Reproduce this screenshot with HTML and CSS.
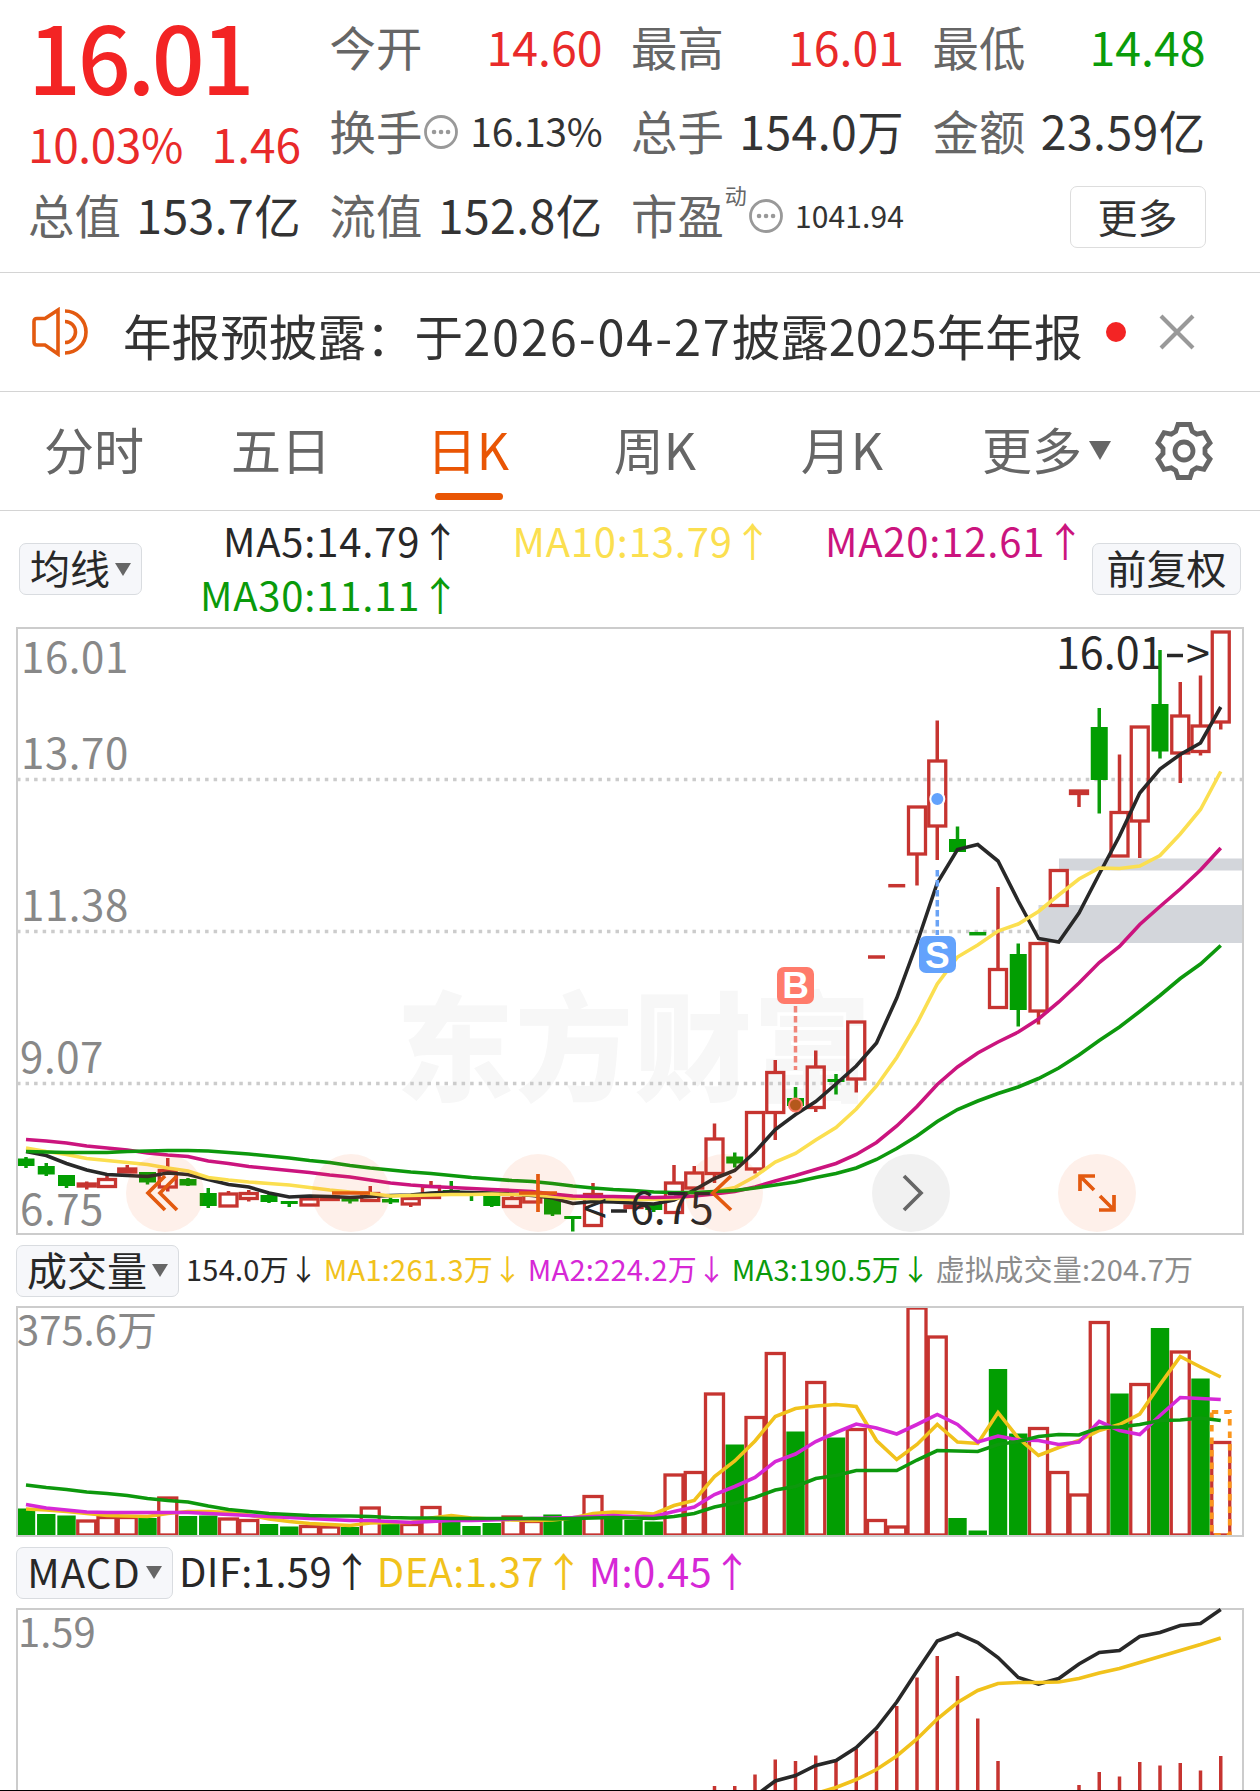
FILE: index.html
```html
<!DOCTYPE html>
<html lang="zh-CN">
<head>
  <meta charset="UTF-8">
  <meta name="viewport" content="width=device-width, initial-scale=1.0">
  <title>日K</title>
  <link rel="stylesheet" href="styles.css">
</head>
<body>
  <header class="quote">
    <div class="price-box">
      <div class="price">16.01</div>
      <div class="change"><span>10.03%</span><span>1.46</span></div>
    </div>
    <div class="item"><label>今开</label><span class="up">14.60</span></div>
    <div class="item"><label>最高</label><span class="up">16.01</span></div>
    <div class="item"><label>最低</label><span class="down">14.48</span></div>
    <div class="item">
      <label>换手</label>
      <svg class="info" viewBox="0 0 36 36"><circle cx="18" cy="18" r="15.5"/><path d="M11 18h.1M18 18h.1M25 18h.1"/></svg>
      <span class="mid">16.13%</span>
    </div>
    <div class="item"><label>总手</label><span>154.0万</span></div>
    <div class="item"><label>金额</label><span>23.59亿</span></div>
    <div class="item"><label>总值</label><span>153.7亿</span></div>
    <div class="item"><label>流值</label><span>152.8亿</span></div>
    <div class="item">
      <label>市盈</label><sup>动</sup>
      <svg class="info" viewBox="0 0 36 36"><circle cx="18" cy="18" r="15.5"/><path d="M11 18h.1M18 18h.1M25 18h.1"/></svg>
      <span class="small">1041.94</span>
    </div>
    <div class="item"><button class="more">更多</button></div>
  </header>

  <div class="notice">
    <svg class="speaker" viewBox="0 0 56 50"><path d="M26 3 13 11.500H5Q2 11.500 2 14.500V35Q2 38 5 38H13L26 47ZM33 4A21 21 0 0 1 33 46M33 14.500A10.500 10.500 0 0 1 33 35.500"/></svg>
    <p>年报预披露：于<span>2026-04-27</span>披露2025年年报</p>
    <i class="dot"></i>
    <svg class="close" viewBox="0 0 36 36"><path d="M2 2 34 34M34 2 2 34"/></svg>
  </div>

  <nav class="tabs">
    <a>分时</a>
    <a>五日</a>
    <a class="active">日K</a>
    <a>周K</a>
    <a>月K</a>
    <a class="last">更多<i class="arrow"></i></a>
    <svg class="gear" viewBox="-30 -30 60 60"><path d="M-8.300-19.500-6-26.500H6L8.300-19.500 12.700-16.900 20-18.400 26-8 21-2.600V2.600L26 8 20 18.400 12.700 16.900 8.300 19.500 6 26.500H-6L-8.300 19.500-12.700 16.900-20 18.400-26 8-21 2.600V-2.600L-26-8-20-18.400-12.700-16.900Z"/><circle r="9"/></svg>
  </nav>

  <div class="ma-bar">
    <button class="tag">均线<i class="arrow"></i></button>
    <div class="ma-list">
      <span class="black">MA5:14.79↑</span>
      <span class="yellow">MA10:13.79↑</span>
      <span class="pink">MA20:12.61↑</span>
      <span class="green">MA30:11.11↑</span>
    </div>
    <button class="tag adjust">前复权</button>
  </div>

  <div class="chart kline">
    <svg id="kline" viewBox="16 627 1228 608"></svg>
    <div class="controls">
      <button><svg viewBox="0 0 78 78"><path d="M39 22 22 39 39 56M51 22 34 39 51 56"/></svg></button>
      <button><svg viewBox="0 0 78 78"><path d="M20 39H58"/></svg></button>
      <button><svg viewBox="0 0 78 78"><path d="M20 39H58M39 20V58"/></svg></button>
      <button><svg viewBox="0 0 78 78"><path d="M46 22 28 39 46 56"/></svg></button>
      <button class="gray"><svg viewBox="0 0 78 78"><path d="M32 22 49 39 32 56"/></svg></button>
      <button><svg viewBox="0 0 78 78"><path d="M36 36 22 22M22 37V22H37M42 42 56 56M56 41V56H41"/></svg></button>
    </div>
  </div>

  <div class="bar">
    <button class="tag">成交量<i class="arrow"></i></button>
    <div class="vol-values">
      <span class="black">154.0万↓</span>
      <span class="gold">MA1:261.3万↓</span>
      <span class="purple">MA2:224.2万↓</span>
      <span class="green">MA3:190.5万↓</span>
      <span class="muted">虚拟成交量:204.7万</span>
    </div>
  </div>

  <div class="chart volume"><svg id="volume" viewBox="16 1306 1228 231"></svg></div>

  <div class="bar">
    <button class="tag latin">MACD<i class="arrow"></i></button>
    <div class="macd-values">
      <span class="black">DIF:1.59↑</span>
      <span class="gold">DEA:1.37↑</span>
      <span class="purple">M:0.45↑</span>
    </div>
  </div>

  <div class="chart macd"><svg id="macd" viewBox="16 1608 1228 182"></svg></div>

  <script>
    const STEP = 20.25;
    const xAt = i => 26 + i * STEP;

    // [type, body top, body bottom, wick top, wick bottom]
    const candles = [
      ['g',1158.5,1166,1157,1168],['g',1166,1174.5,1163,1176],['g',1175,1186,1175,1188],['r',1184,1186,1181.5,1189.5],
      ['r',1179.5,1186.5,1176,1187],['r',1169,1172,1165,1173],['g',1172,1182.5,1172,1184.5],['r',1170.5,1187,1158,1191.5],
      ['g',1179,1185.5,1178,1186],['g',1193,1206,1188,1208],['r',1194,1206,1191,1206],['r',1193.5,1198.5,1190,1201.5],
      ['g',1195,1202,1193.5,1203],['g',1201,1204,1201,1207],['r',1199,1205,1198,1205],['r',1197,1199.5,1197,1199],
      ['g',1198.5,1201.5,1198,1203.5],['r',1193.5,1200.5,1186,1201],['g',1199,1202.5,1197.5,1204],['r',1198.5,1204,1197,1207],
      ['r',1186.5,1197.5,1181,1198],['g',1190,1193,1181,1193],['g',1193,1196,1193,1201],['g',1196,1206,1196,1207],
      ['r',1198.5,1206.5,1195.5,1207],['r',1195,1202,1194,1202],['g',1198,1214.5,1198,1216],['g',1216,1219,1216,1231.5],
      ['r',1194.5,1225.5,1183,1226],['g',1197,1200,1197,1200],['r',1206,1207.5,1205,1208],['g',1203.5,1210,1203,1212],
      ['r',1183,1212.5,1165,1213],['r',1173,1188,1166,1188],['r',1139,1173.5,1123.5,1183],['g',1156.5,1163.5,1152.5,1167.5],
      ['r',1112.5,1169,1112,1173.5],['r',1072.5,1112.5,1060,1140],['g',1098,1106,1087,1106],['r',1067,1107.5,1050.5,1112],
      ['g',1079,1082,1074,1094.5],['r',1022,1079,1022,1092.5],['-',957],['-',885.7],
      ['r',807,854,807,885.5],['r',761,826,720.5,860],['g',839,852,826.5,852],['=',933.7],
      ['r',969.5,1007.5,887,1008],['g',954,1010,943.5,1026.5],['r',943.5,1011,943.5,1024.5],['r',870.5,905.5,870.5,905.5],
      ['r',791,793.5,791,807],['g',727,780,708,813.5],['r',812.5,856,754.5,856],['r',727,821,727,858],
      ['g',704,751.5,650,758.5],['r',716,753,682,783],['r',726,751.5,675.5,755.5],['r',632,722,632,729.5]
    ];

    const ma5 = [1151.5,1155.5,1163.5,1170,1174.5,1175.5,1176.5,1173,1174.5,1179.5,1184.5,1187,1193,1197,1196,1196.5,1197.5,1196.5,1195.5,1195,1193,1192,1192.5,1193,1194,1195.5,1198,1203.5,1201.5,1202,1203,1204,1200,1190,1178.5,1170.5,1152,1129.5,1114.5,1101.5,1084,1066,1043,998,943,883,849.5,844.5,861,901,938.5,942,913,874,836,793,769,754.5,743,707];
    const ma10 = [1148,1151.5,1154.5,1158.5,1160.5,1162.5,1164.5,1168,1171,1177.5,1180,1182,1183.5,1185,1187.5,1190,1192,1193.5,1196,1195.5,1195,1194.5,1194.5,1194,1194.5,1195,1196.5,1198.5,1198.5,1199,1199.5,1199.5,1198.5,1196,1191.5,1187.5,1176.5,1162,1153.5,1140,1127.5,1109,1086,1057.5,1023.5,984,957,945,931,924,911.5,895,879,868,868.5,866,855.5,834,809.5,771.5];
    const ma20 = [1139.5,1141,1143,1146,1148,1150,1153,1155,1156.5,1161,1163.5,1166.5,1168.5,1170.5,1172.5,1175,1177,1180,1183,1185,1186.5,1187.5,1188.5,1189.5,1190.5,1191.5,1194,1196,1196.5,1196.5,1197,1197.5,1197,1196,1194,1191.5,1187,1181,1175.5,1169.5,1163.5,1154.5,1142.5,1126,1106.5,1084.5,1067,1053,1042,1032,1019,1002,983,962.5,946.5,924.5,906.5,889,870,848];
    const ma30 = [1151.5,1152,1152.5,1152.5,1152.5,1151.5,1151,1150.5,1150.5,1151,1152.5,1154,1156,1158,1160.5,1162.5,1165.5,1168,1170,1172,1173.5,1175.5,1177.5,1179,1180.5,1181.5,1183.5,1186,1188,1189.5,1190.5,1192,1192.5,1192.5,1191.5,1190.5,1188,1185,1182,1177.5,1173.5,1168,1159.5,1148.5,1136,1121.5,1109.5,1101,1093.5,1087,1078.5,1068,1055,1040.5,1027,1011.5,995.5,978.5,964,945.5];

    const volTypes = 'gggrrrgrggrrggrrgrgrrgggrrggrgggrrrgrrgrgrrrrrggggrrrrgrgrgr';
    const volTops = [1508.5,1514,1515.5,1521,1517.5,1517.5,1518,1498,1516,1515.5,1519,1520.5,1524,1526.5,1526.5,1527,1527,1508,1523,1524.5,1507.5,1522,1526,1523,1517,1521.5,1514.5,1518,1496.5,1517,1520,1521.5,1475,1472.5,1394,1444.5,1417.5,1353.5,1431.5,1382.5,1437.5,1429.5,1520.5,1527,1308,1337,1518,1530.5,1369,1433.5,1428.5,1472.5,1495,1322.5,1393.5,1384.5,1328,1352,1378.5,1442.5];
    const volMa1 = [1509,1510,1511.5,1513.5,1515.5,1516,1516.5,1513.5,1511.5,1511.5,1512.5,1515,1519,1521.5,1523.5,1524.5,1525.5,1523,1522.5,1522.5,1518,1515.5,1518,1519,1520,1520.5,1520,1518,1513.5,1512,1512.5,1514,1505.5,1500.5,1476.5,1461,1441,1416.5,1408.5,1406,1404.5,1406.5,1440.5,1459.5,1444.5,1424.5,1442,1443.5,1412.5,1438,1455.5,1447.5,1440.5,1430.5,1424.5,1414,1384.5,1356.5,1367,1377];
    const volMa2 = [1504.5,1508,1510,1512,1512.5,1512.5,1512.5,1512.5,1512.5,1513.5,1514.5,1515.5,1516.5,1517.5,1518.5,1519.5,1520.5,1520.5,1521.5,1522.5,1521.5,1520.5,1520.5,1520,1519,1518.5,1518,1517.5,1516.5,1515.5,1516.5,1516.5,1511.5,1507,1494.5,1486.5,1477.5,1461.5,1454,1441.5,1432.5,1424,1428,1434,1424.5,1414.5,1424.5,1442,1436,1440,1440.5,1444.5,1442,1421.5,1430.5,1434.5,1415.5,1397.5,1398.5,1399.5];
    const volMa3 = [1485,1487.5,1489.5,1492,1493.5,1495.5,1498.5,1500.5,1502,1506,1509.5,1511.5,1513.5,1514.5,1515.5,1516,1516,1516.5,1517.5,1518,1518,1518.5,1518.5,1518.5,1518.5,1518.5,1519,1518.5,1518,1517.5,1518,1518.5,1516.5,1513.5,1507,1503,1497.5,1490,1486.5,1478.5,1475.5,1470.5,1470.5,1470.5,1460,1450.5,1451,1451.5,1444.5,1441.5,1436.5,1434.5,1435,1427.5,1427,1424.5,1420.5,1420,1418,1420.5];

    const macdBars = {34:1786,35:1786,36:1774.5,37:1759.5,38:1761,39:1755.5,40:1760.5,41:1749,42:1731,43:1706,44:1677.5,45:1656,46:1676,47:1718.5,48:1761,52:1785,53:1772,54:1776.5,55:1762,56:1765.5,57:1763,58:1770.5,59:1756};
    const dif = [1796,1781,1775.5,1765.5,1760.5,1747.5,1728,1702,1671,1641,1633.5,1642.5,1657.5,1677.5,1684,1678.5,1664,1652.5,1650.5,1636.5,1632.5,1625.5,1623.5,1609.5];
    const dea = [1793.5,1787.5,1779.5,1769.5,1756,1739,1719,1702.5,1690.5,1683.5,1682.5,1682.5,1682,1678.5,1673,1668.5,1662.5,1656.5,1650.5,1644.5,1638];

    function line(data, cls, start = 0) {
      const points = data.map((y, i) => `${xAt(i + start)},${y}`).join(' ');
      return `<polyline class="line ${cls}" points="${points}"/>`;
    }

    function label(x, y, text, cls = 'axis') {
      return `<text class="${cls}" x="${x}" y="${y}">${text}</text>`;
    }

    function candle(c, i) {
      const [type, top, bottom, high, low] = c;
      const x = xAt(i);
      if (type === '-' || type === '=') {
        return `<path class="wick ${type === '-' ? 'r' : 'g'}" d="M${x - 8.5} ${top}h17"/>`;
      }
      if (type === 'g') {
        return `<path class="wick g" d="M${x} ${high}V${low}"/><rect class="body g" x="${x - 8.5}" y="${top}" width="17" height="${bottom - top}"/>`;
      }
      return `<path class="wick r" d="M${x} ${high}V${top}M${x} ${bottom}V${low}"/><rect class="body r" x="${x - 8.5}" y="${top}" width="17" height="${bottom - top}"/>`;
    }

    function drawKline() {
      let svg = label(396, 1092, '东方财富', 'watermark');
      svg += '<path class="grid" d="M17 779.500H1243M17 931.500H1243M17 1083.500H1243"/>';
      svg += '<rect class="gap" x="1059" y="858.500" width="184" height="12"/><rect class="gap" x="1038.500" y="905" width="204.500" height="38"/>';
      svg += label(21, 673, '16.01') + label(21, 769, '13.70') + label(21, 921, '11.38') + label(20, 1073, '9.07') + label(20, 1225, '6.75');
      svg += label(1056, 669, '16.01', 'mark') + '<path class="mark-arrow" d="M1167 655.500h16"/>' + label(1186, 669, '&gt;', 'mark');
      svg += candles.map(candle).join('');
      svg += line(ma5, 'c-black') + line(ma10, 'c-yellow') + line(ma20, 'c-pink') + line(ma30, 'c-green');
      svg += label(583, 1224, '&lt;', 'mark') + '<path class="mark-arrow" d="M611 1211h16"/>' + label(630, 1224, '6.75', 'mark');
      // buy / sell points
      svg += '<path class="buy-line" d="M795.500 1006V1070"/><circle class="buy-dot" cx="795.500" cy="1105" r="6.500"/><rect class="buy" x="777" y="967" width="37" height="37" rx="7"/>' + label(795.5, 998, 'B', 'flag');
      svg += '<path class="sell-line" d="M937.300 870V935"/><circle class="sell-dot" cx="937.300" cy="799" r="7"/><rect class="sell" x="919" y="936" width="37" height="37" rx="7"/>' + label(937.3, 967.5, 'S', 'flag');
      document.getElementById('kline').innerHTML = svg;
    }

    function drawVolume() {
      let svg = volTops.map((y, i) => volTypes[i] === 'g'
        ? `<rect class="body g" x="${xAt(i) - 9.2}" y="${y}" width="18.400" height="${1536 - y}"/>`
        : `<rect class="body r" x="${xAt(i) - 9}" y="${y}" width="18" height="${1535 - y}"/>`).join('');
      svg += `<rect class="virtual" x="${xAt(59) - 9}" y="1412" width="18" height="123"/>`;
      svg += line(volMa1, 'c-gold') + line(volMa2, 'c-purple') + line(volMa3, 'c-green');
      svg += label(17, 1345, '375.6万', 'axis axis-small');
      document.getElementById('volume').innerHTML = svg;
    }

    function drawMacd() {
      let svg = Object.entries(macdBars).map(([i, y]) => `<path class="wick r" d="M${xAt(i)} ${y}V1792"/>`).join('');
      svg += line(dif, 'c-black', 36) + line(dea, 'c-gold', 39);
      svg += label(18, 1647, '1.59', 'axis axis-small');
      document.getElementById('macd').innerHTML = svg;
    }

    drawKline();
    drawVolume();
    drawMacd();
  </script>
</body>
</html>
```
FILE: styles.css
```css
* {
  box-sizing: border-box;
}

body {
  margin: 0;
  width: 1260px;
  height: 1791px;
  overflow: hidden;
  background-color: #fff;
  color: #333;
  font-family: "Noto Sans CJK SC", sans-serif;
  border-bottom: 1px solid #000;
}

button {
  font-family: inherit;
  padding: 0;
}

svg {
  display: block;
  fill: none;
}

/* quote header */
.quote {
  display: grid;
  grid-template-columns: repeat(4, 273px);
  grid-template-rows: repeat(3, 84px);
  column-gap: 28.5px;
  height: 273px;
  padding: 6px 0 0 28px;
  border-bottom: 1px solid #d4d4d4;
}

.price-box {
  grid-row: span 2;
  color: #f32424;
}

.price {
  height: 109px;
  line-height: 97px;
  font-size: 93px;
  font-weight: 500;
  letter-spacing: -3.3px;
}

.change {
  display: flex;
  justify-content: space-between;
  height: 57px;
  line-height: 57px;
  font-size: 46px;
  color: #e92a2a;
}

.change span:first-child {
  letter-spacing: -0.4px;
}

.item {
  display: flex;
  align-items: center;
  font-size: 46.4px;
  line-height: 78px;
  white-space: nowrap;
}

.item label {
  padding-bottom: 5px;
  color: #666;
}

.item span {
  padding-bottom: 5px;
  letter-spacing: 0.4px;
}

.item span,
.item button {
  margin-left: auto;
}

.item .up,
.item .down {
  letter-spacing: 0;
}

.item .up {
  color: #e92a2a;
}

.item .down {
  color: #0a9c0a;
}

.item .mid {
  font-size: 39px;
  letter-spacing: -0.2px;
}

.item .small {
  font-size: 30px;
  letter-spacing: 0.1px;
  padding-bottom: 3px;
}

.item sup {
  font-size: 22px;
  line-height: 22px;
  color: #666;
  margin: 0 0 45px 1px;
}

.info {
  width: 36px;
  height: 36px;
  margin-left: 1px;
  stroke: #999;
  stroke-width: 2.8;
}

.info path {
  stroke-width: 4.5;
  stroke-linecap: round;
}

.more {
  width: 136px;
  height: 62px;
  margin-top: 2px;
  padding-bottom: 3px;
  font-size: 40px;
  line-height: 56px;
  color: #333;
  background: #fff;
  border: 1px solid #ddd;
  border-radius: 7px;
}

/* notice */
.notice {
  display: flex;
  align-items: center;
  height: 119px;
  padding-left: 32px;
  border-bottom: 1px solid #d4d4d4;
}

.speaker {
  width: 56px;
  height: 50px;
  stroke: #e35a10;
  stroke-width: 3.6;
}

.notice p {
  margin: 5px 0 0 35px;
  width: 960px;
  font-size: 48.6px;
  white-space: nowrap;
}

.notice p span {
  letter-spacing: 1.9px;
}

.dot {
  width: 20px;
  height: 20px;
  margin-left: 23px;
  border-radius: 50%;
  background-color: #f32424;
}

.close {
  width: 36px;
  height: 36px;
  margin-left: 33px;
  stroke: #999;
  stroke-width: 4.2;
}

/* tabs */
.tabs {
  display: flex;
  height: 119px;
  border-bottom: 1px solid #d4d4d4;
}

.tabs a {
  position: relative;
  display: flex;
  align-items: center;
  justify-content: center;
  width: 187px;
  padding: 0 0 7px 1px;
  font-size: 50px;
  color: #666;
}

.tabs .active {
  color: #e95504;
}

.tabs .active::after {
  content: "";
  position: absolute;
  left: 61px;
  bottom: 10px;
  width: 68px;
  height: 7px;
  border-radius: 4px;
  background-color: #e95504;
}

.tabs .last {
  padding-left: 36px;
}

.arrow {
  width: 0;
  height: 0;
  margin: 4px 0 0 5px;
  border: 8.5px solid transparent;
  border-top: 13px solid #666;
  border-bottom: 0;
}

.tabs .arrow {
  margin: 6px 0 0 7px;
  border-width: 19px 11.5px 0;
}

.gear {
  width: 60px;
  height: 60px;
  margin: 29px 0 0 32px;
  stroke: #666;
  stroke-width: 4.8;
}

/* indicator bars */
.ma-bar {
  display: flex;
  align-items: center;
  height: 116px;
  padding: 0 19px 0 19px;
}

.tag {
  display: flex;
  align-items: center;
  justify-content: center;
  flex: none;
  height: 52px;
  padding: 0 10px 4px;
  font-size: 40px;
  line-height: 46px;
  color: #282828;
  background-color: #f6f7fa;
  border: 1px solid #d9dce0;
  border-radius: 7px;
}

.adjust {
  width: 149px;
}

.latin {
  width: 157px;
  letter-spacing: 1px;
}

.ma-list {
  flex: 1;
  display: grid;
  grid-template-columns: repeat(3, 312.5px);
  grid-auto-rows: 54.5px;
  justify-content: end;
  margin: -4px 6px 0 0;
  font-size: 40px;
  line-height: 54px;
  letter-spacing: 0.8px;
  text-align: right;
}

.bar {
  display: flex;
  align-items: center;
  height: 71px;
  padding-left: 16px;
}

.vol-values,
.macd-values {
  display: flex;
  white-space: nowrap;
}

.vol-values {
  gap: 5.5px;
  margin-left: 7px;
  padding-bottom: 5px;
  font-size: 29px;
  letter-spacing: 0.25px;
}

.macd-values {
  gap: 4.5px;
  margin-left: 6px;
  padding-bottom: 5px;
  font-size: 40px;
  line-height: 56px;
  letter-spacing: 0.35px;
}

.black { color: #282828; }
.yellow { color: #fbdf50; }
.pink { color: #cb147e; }
.green { color: #0a9a0a; }
.gold { color: #f1c21c; }
.purple { color: #d628d6; }
.muted { color: #8c8c8c; }

/* charts */
.chart {
  position: relative;
  width: 1228px;
  margin-left: 16px;
  outline: 2px solid #ccc;
  outline-offset: -2px;
}

.kline { height: 608px; }
.volume { height: 231px; }

.macd {
  height: 182px;
  outline: none;
  border: 2px solid #ccc;
  border-bottom: 0;
}

.macd svg {
  width: 1228px;
  margin: -2px;
}

.wick { stroke-width: 3.5; }
.wick.r, .body.r { stroke: #c63430; }
.body.r { stroke-width: 3.3; }
.wick.g { stroke: #0a9c0a; }
.body.g { fill: #029e02; }

.line { stroke-width: 3.6; }
.c-black { stroke: #282828; }
.c-yellow { stroke: #fbdf50; }
.c-pink { stroke: #cb147e; }
.c-green { stroke: #0d980d; }
.c-gold { stroke: #f1c21c; }
.c-purple { stroke: #d628d6; }

.grid {
  stroke: #ccc;
  stroke-width: 3.5;
  stroke-dasharray: 3.5 5.05;
}

.gap { fill: #d3d6db; }

.axis {
  font-size: 42px;
  letter-spacing: 0.6px;
  fill: #888;
}

.axis-small {
  font-size: 40px;
  letter-spacing: 0;
}

.mark {
  font-size: 43px;
  fill: #282828;
}

.mark-arrow {
  stroke: #282828;
  stroke-width: 3.5;
}

.watermark {
  font-size: 118px;
  font-weight: 900;
  letter-spacing: 1px;
  fill: #f7f7f7;
}

.flag {
  font-family: "Liberation Sans", sans-serif;
  font-size: 37px;
  font-weight: bold;
  text-anchor: middle;
  fill: #fff;
}

.buy { fill: #ff7b6b; }
.sell { fill: #63a2fc; }

.buy-line, .sell-line {
  stroke: #f0857a;
  stroke-width: 3.5;
  stroke-dasharray: 6.500 3.500;
}

.sell-line { stroke: #6aa3f5; }

.buy-dot, .sell-dot {
  fill: #b4581c;
  stroke: #ff7b6b;
  stroke-width: 2;
}

.sell-dot {
  fill: #63a2fc;
  stroke: #fff;
}

.virtual {
  stroke: #fb961c;
  stroke-width: 3.8;
  stroke-dasharray: 6.500 6;
}

.controls {
  position: absolute;
  left: 110px;
  bottom: 3px;
  display: flex;
  gap: 108.4px;
}

.controls button {
  width: 78px;
  height: 78px;
  border: 0;
  border-radius: 50%;
  background-color: rgba(240, 90, 20, 0.09);
}

.controls svg {
  stroke: #e35a10;
  stroke-width: 3.7;
}

.controls .gray {
  background-color: rgba(100, 100, 100, 0.09);
}

.controls .gray svg {
  stroke: #666;
}
```
